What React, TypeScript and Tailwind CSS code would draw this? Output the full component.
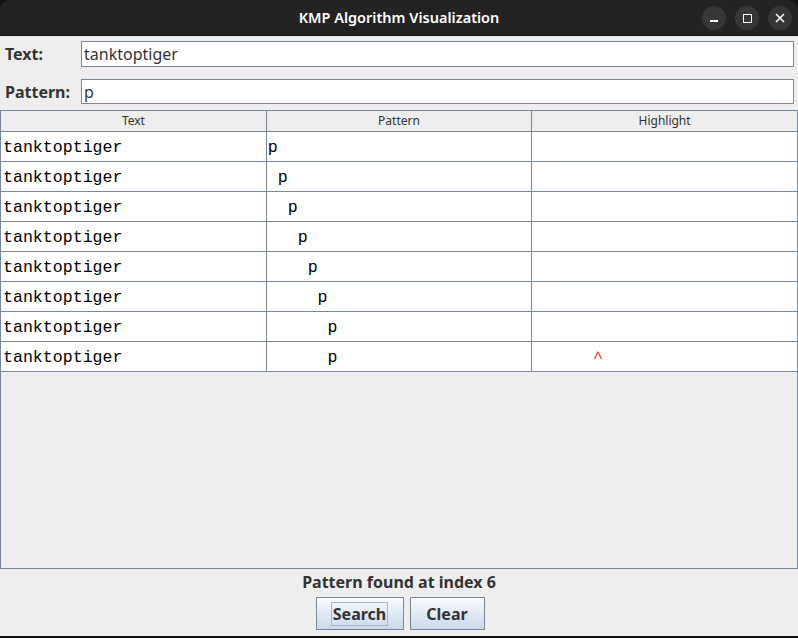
import React from 'react';

// ─── Data ────────────────────────────────────────────────────────────────────

const TEXT = 'tanktoptiger';
const SHIFTS = [0, 1, 2, 3, 4, 5, 6, 6];
const MATCH_ROW = 7;
const MONO = { fontFamily: '"Liberation Mono", monospace' };

// ─── Sub-components ──────────────────────────────────────────────────────────

function TitleBar() {
	return (
		<div className="relative h-[36px] bg-[#232323] rounded-t-[10px] flex items-center justify-center border-b border-[#111]">
			<span className="text-[14.5px] font-semibold text-white">KMP Algorithm Visualization</span>
			<div className="absolute right-[6px] top-[6px] flex gap-[9px]">
				<button className="w-[24px] h-[24px] rounded-full bg-[#373737] flex items-center justify-center">
					<span className="block w-[8px] h-[1.5px] bg-white mt-[6px]" />
				</button>
				<button className="w-[24px] h-[24px] rounded-full bg-[#373737] flex items-center justify-center">
					<span className="block w-[9px] h-[9px] border-[1.5px] border-white" />
				</button>
				<button className="w-[24px] h-[24px] rounded-full bg-[#373737] flex items-center justify-center">
					<svg width="10" height="10" viewBox="0 0 10 10">
						<path d="M1 1 L9 9 M9 1 L1 9" stroke="white" strokeWidth="1.5" />
					</svg>
				</button>
			</div>
		</div>
	);
}

function FieldRow({ label, value, h }: { label: string; value: string; h: string }) {
	return (
		<div className="flex items-center pl-[5px] pr-[4px]">
			<span className="w-[76px] text-[16px] font-bold text-[#333]">{label}</span>
			<div className={`flex-1 ${h} border border-[#7a8797] bg-white flex items-center pl-[2px] text-[16px] text-[#333]`}>
				{value}
			</div>
		</div>
	);
}

// ─── Main ────────────────────────────────────────────────────────────────────

export default function App() {
	return (
		<div
			className="w-[798px] h-[638px] bg-[#111] flex flex-col overflow-hidden pb-[2px]"
			style={{ fontFamily: '"Noto Sans", "Open Sans", sans-serif' }}
		>
			<TitleBar />
			<div className="flex-1 bg-[#eeeeee] flex flex-col pt-[5px]">
				<FieldRow label="Text:" value="tanktoptiger" h="h-[26px]" />
				<div className="h-[12px]" />
				<FieldRow label="Pattern:" value="p" h="h-[25px]" />

				{/* Table scroll pane */}
				<div className="mt-[6px] h-[459px] border border-[#7a8797] bg-[#eeeeee]">
					<table className="w-full border-collapse table-fixed">
						<thead>
							<tr className="h-[20px] bg-[#eeeeee]">
								{['Text', 'Pattern', 'Highlight'].map((h) => (
									<th
										key={h}
										className="font-normal text-[12px] leading-[19px] text-[#333] border-r border-b border-[#7a8797] last:border-r-0 p-0"
									>
										{h}
									</th>
								))}
							</tr>
						</thead>
						<tbody>
							{SHIFTS.map((s, i) => (
								<tr key={i} className="h-[30px] bg-white">
									<td className="border-r border-b border-[#7a8797] pl-[2px] pt-[3px] pb-0 pr-0 text-[16.6px] leading-[26px] text-black whitespace-pre" style={MONO}>
										{TEXT}
									</td>
									<td className="border-r border-b border-[#7a8797] pl-[1px] pt-[3px] pb-0 pr-0 text-[16.6px] leading-[26px] text-black whitespace-pre" style={MONO}>
										{' '.repeat(s) + 'p'}
									</td>
									<td className="border-b border-[#7a8797] p-0 relative">
										{i === MATCH_ROW && (
											<span className="absolute left-[61px] top-[2px] text-[17px] text-[#ff2a2a]">^</span>
										)}
									</td>
								</tr>
							))}
						</tbody>
					</table>
				</div>

				<div className="text-center text-[16px] font-bold text-[#333] mt-[2px] leading-[22px]">
					Pattern found at index 6
				</div>
				<div className="flex justify-center gap-[6px] mt-[4px] pl-[2px]">
					<button className="w-[88px] h-[33px] border border-[#7a8797] bg-gradient-to-b from-[#fbfcfe] to-[#c9d9ea] text-[16px] font-bold text-[#333] flex items-center justify-center">
						<span className="border border-[#a3b8cc] px-[1px] leading-[22px]">Search</span>
					</button>
					<button className="w-[75px] h-[33px] border border-[#7a8797] bg-gradient-to-b from-[#fbfcfe] to-[#c9d9ea] text-[16px] font-bold text-[#333]">
						Clear
					</button>
				</div>
			</div>
		</div>
	);
}
